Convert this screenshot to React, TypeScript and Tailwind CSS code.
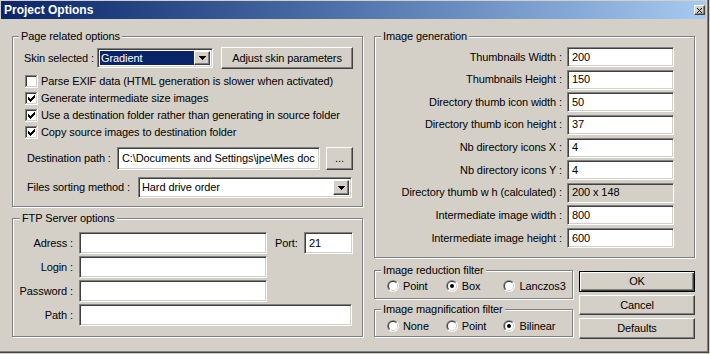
import React, { useId } from "react";

const sunken =
  "box-border border border-t-[#808080] border-l-[#808080] border-b-white border-r-white shadow-[inset_1px_1px_0_#404040,inset_-1px_-1px_0_#d4d0c8]";
const raised =
  "box-border border border-t-white border-l-white border-b-[#404040] border-r-[#404040] shadow-[inset_-1px_-1px_0_#808080] bg-[#d4d0c8]";
const etched = "relative box-border border border-[#808080] shadow-[inset_1px_1px_0_#fff,1px_1px_0_#fff]";

function Check({ checked }: { checked: boolean }) {
  return (
    <svg width="13" height="13" viewBox="0 0 13 13" shapeRendering="crispEdges" className="shrink-0">
      <rect x="0" y="0" width="13" height="13" fill="#fff" />
      <path d="M0 0h12v1H1v11H0z" fill="#808080" />
      <path d="M1 1h10v1H2v9H1z" fill="#404040" />
      <path d="M1 11h11v1H1z M11 1h1v11h-1z" fill="#d4d0c8" />
      {checked && (
        <path
          d="M3 5h1v3h-1z M4 6h1v3h-1z M5 7h1v3h-1z M6 6h1v3h-1z M7 5h1v3h-1z M8 4h1v3h-1z M9 3h1v3h-1z"
          fill="#000"
        />
      )}
    </svg>
  );
}

function Radio({ checked }: { checked: boolean }) {
  const id = useId().replace(/:/g, "");
  return (
    <svg width="12" height="12" viewBox="0 0 12 12" className="shrink-0">
      <defs>
        <clipPath id={`tl${id}`}>
          <polygon points="0,0 12,0 0,12" />
        </clipPath>
        <clipPath id={`br${id}`}>
          <polygon points="12,0 12,12 0,12" />
        </clipPath>
      </defs>
      <circle cx="6" cy="6" r="6" fill="#fff" />
      <g clipPath={`url(#tl${id})`}>
        <circle cx="6" cy="6" r="6" fill="#808080" />
        <circle cx="6" cy="6" r="5" fill="#404040" />
      </g>
      <g clipPath={`url(#br${id})`}>
        <circle cx="6" cy="6" r="5" fill="#d4d0c8" />
      </g>
      <circle cx="6" cy="6" r="4" fill="#fff" />
      {checked && <circle cx="6" cy="6" r="2" fill="#000" />}
    </svg>
  );
}

function Arrow() {
  return (
    <svg width="7" height="4" viewBox="0 0 7 4" shapeRendering="crispEdges">
      <path d="M0 0h7v1H0z M1 1h5v1H1z M2 2h3v1H2z M3 3h1v1H3z" fill="#000" />
    </svg>
  );
}

function DropBtn() {
  return (
    <div className={`${raised} w-[16px] h-full flex items-center justify-center shrink-0`}>
      <Arrow />
    </div>
  );
}

function RadioItem({ label, checked, w }: { label: string; checked: boolean; w: string }) {
  return (
    <div className={`flex items-center gap-[4px] ${w}`}>
      <Radio checked={checked} />
      <span className="leading-[12px]">{label}</span>
    </div>
  );
}

function CheckRow({ label, checked }: { label: string; checked: boolean }) {
  return (
    <div className="flex items-center gap-[3px] h-[13px] ml-[1px]">
      <Check checked={checked} />
      <span className="leading-[13px] whitespace-nowrap">{label}</span>
    </div>
  );
}

function GenRow({ label, value, gray }: { label: string; value: string; gray?: boolean }) {
  return (
    <div className="flex items-center h-[20px]">
      <div className="w-[187px] text-right whitespace-nowrap">{label}</div>
      <div
        className={`${sunken} ml-[5px] w-[107px] h-[20px] flex items-center pl-[4px] ${
          gray ? "bg-[#d4d0c8]" : "bg-white"
        }`}
      >
        {value}
      </div>
    </div>
  );
}

function FtpLabel({ children }: { children: React.ReactNode }) {
  return <div className="w-[59px] text-right whitespace-nowrap">{children}</div>;
}

export default function App() {
  return (
    <div className="w-[710px] h-[354px] bg-[#d4d0c8] font-['Liberation_Sans',Arial,sans-serif] text-[11px] tracking-[-0.1px] text-black leading-[13px] overflow-hidden">
      <div className="w-[709px] h-[353px] pt-[1px] pl-[1px] border-r border-b border-[#404040] shadow-[inset_-1px_-1px_0_#808080]">
        {/* Title bar */}
        <div className="w-[705px] h-[18px] bg-gradient-to-r from-[#0a246a] to-[#a6caf0] flex items-center justify-between pl-[3px] pr-[1px]">
          <span className="text-white font-bold text-[12px] leading-[14px] tracking-normal">Project Options</span>
          <div className={`${raised} w-[11px] h-[10px] flex items-center justify-center`}>
            <svg width="5" height="5" viewBox="0 0 5 5" shapeRendering="crispEdges">
              <path d="M0 0h1v1H0z M1 1h1v1H1z M2 2h1v1H2z M3 3h1v1H3z M4 4h1v1H4z M4 0h1v1H4z M3 1h1v1H3z M1 3h1v1H1z M0 4h1v1H0z" fill="#000" />
            </svg>
          </div>
        </div>

        <div className="flex ml-[11px] mt-[17px] gap-[11px]">
          {/* Left column */}
          <div className="w-[351px] flex flex-col">
            <div className={`${etched} h-[171px] pt-[10px] pl-[11px]`}>
              <span className="absolute -top-[7px] left-[6px] bg-[#d4d0c8] px-[2px] whitespace-nowrap">
                Page related options
              </span>
              <div className="flex items-center h-[22px]">
                <div className="w-[73px] whitespace-nowrap">Skin selected :</div>
                <div className={`${sunken} w-[116px] h-[20px] bg-white flex items-stretch p-[2px]`}>
                  <div className="flex-1 bg-[#0a246a] text-white flex items-center pl-[1px]">Gradient</div>
                  <DropBtn />
                </div>
                <div className={`${raised} ml-[8px] w-[132px] h-[22px] flex items-center justify-center`}>
                  Adjust skin parameters
                </div>
              </div>
              <div className="flex flex-col gap-[4px] mt-[6px]">
                <CheckRow label="Parse EXIF data (HTML generation is slower when activated)" checked={false} />
                <CheckRow label="Generate intermediate size images" checked />
                <CheckRow label="Use a destination folder rather than generating in source folder" checked />
                <CheckRow label="Copy source images to destination folder" checked />
              </div>
              <div className="flex items-center mt-[8px] ml-[3px] h-[23px]">
                <div className="w-[90px] whitespace-nowrap">Destination path :</div>
                <div className={`${sunken} w-[203px] h-[23px] bg-white flex items-center pl-[4px] overflow-hidden whitespace-nowrap`}>
                  C:\Documents and Settings\jpe\Mes doc
                </div>
                <div className={`${raised} ml-[6px] w-[27px] h-[23px] flex items-center justify-center`}>...</div>
              </div>
              <div className="flex items-center mt-[7px] ml-[3px] h-[21px]">
                <div className="w-[111px] whitespace-nowrap">Files sorting method :</div>
                <div className={`${sunken} w-[214px] h-[21px] bg-white flex items-stretch p-[2px]`}>
                  <div className="flex-1 flex items-center pl-[1px]">Hard drive order</div>
                  <DropBtn />
                </div>
              </div>
            </div>

            <div className={`${etched} mt-[11px] h-[119px] pt-[13px] pl-[1px]`}>
              <span className="absolute -top-[7px] left-[7px] bg-[#d4d0c8] px-[2px] whitespace-nowrap">
                FTP Server options
              </span>
              <div className="flex flex-col gap-[2px]">
                <div className="flex items-center h-[22px]">
                  <FtpLabel>Adress :</FtpLabel>
                  <div className={`${sunken} ml-[6px] w-[188px] h-[22px] bg-white`} />
                  <div className="ml-[8px] w-[29px] whitespace-nowrap">Port:</div>
                  <div className={`${sunken} w-[49px] h-[22px] bg-white flex items-center pl-[4px]`}>21</div>
                </div>
                <div className="flex items-center h-[22px]">
                  <FtpLabel>Login :</FtpLabel>
                  <div className={`${sunken} ml-[6px] w-[188px] h-[22px] bg-white`} />
                </div>
                <div className="flex items-center h-[22px]">
                  <FtpLabel>Password :</FtpLabel>
                  <div className={`${sunken} ml-[6px] w-[188px] h-[22px] bg-white`} />
                </div>
                <div className="flex items-center h-[22px]">
                  <FtpLabel>Path :</FtpLabel>
                  <div className={`${sunken} ml-[6px] w-[273px] h-[22px] bg-white`} />
                </div>
              </div>
            </div>
          </div>

          {/* Right column */}
          <div className="w-[321px] flex flex-col">
            <div className={`${etched} h-[222px] pt-[10px]`}>
              <span className="absolute -top-[7px] left-[6px] bg-[#d4d0c8] px-[2px] whitespace-nowrap">
                Image generation
              </span>
              <div className="h-[201px] flex flex-col justify-between">
                <GenRow label="Thumbnails Width :" value="200" />
                <GenRow label="Thumbnails Height :" value="150" />
                <GenRow label="Directory thumb icon width :" value="50" />
                <GenRow label="Directory thumb icon height :" value="37" />
                <GenRow label="Nb directory icons X :" value="4" />
                <GenRow label="Nb directory icons Y :" value="4" />
                <GenRow label="Directory thumb w h (calculated) :" value="200 x 148" gray />
                <GenRow label="Intermediate image width :" value="800" />
                <GenRow label="Intermediate image height :" value="600" />
              </div>
            </div>

            <div className="flex mt-[12px] gap-[6px]">
              <div className="w-[199px] flex flex-col">
                <div className={`${etched} h-[29px] pt-[9px] pl-[12px]`}>
                  <span className="absolute -top-[7px] left-[6px] bg-[#d4d0c8] px-[2px] whitespace-nowrap">
                    Image reduction filter
                  </span>
                  <div className="flex h-[12px]">
                    <RadioItem label="Point" checked={false} w="w-[60px]" />
                    <RadioItem label="Box" checked w="w-[59px]" />
                    <RadioItem label="Lanczos3" checked={false} w="w-[70px]" />
                  </div>
                </div>
                <div className={`${etched} mt-[10px] h-[28px] pt-[10px] pl-[12px]`}>
                  <span className="absolute -top-[7px] left-[6px] bg-[#d4d0c8] px-[2px] whitespace-nowrap">
                    Image magnification filter
                  </span>
                  <div className="flex h-[12px]">
                    <RadioItem label="None" checked={false} w="w-[60px]" />
                    <RadioItem label="Point" checked={false} w="w-[59px]" />
                    <RadioItem label="Bilinear" checked w="w-[70px]" />
                  </div>
                </div>
              </div>
              <div className="w-[116px] flex flex-col pt-[1px]">
                <div className="box-border border border-black shadow-[inset_1px_1px_0_#fff,inset_-1px_-1px_0_#404040,inset_-2px_-2px_0_#808080] bg-[#d4d0c8] h-[21px] flex items-center justify-center">
                  OK
                </div>
                <div className={`${raised} mt-[3px] h-[20px] flex items-center justify-center`}>Cancel</div>
                <div className={`${raised} mt-[3px] h-[21px] flex items-center justify-center`}>Defaults</div>
              </div>
            </div>
          </div>
        </div>
      </div>
    </div>
  );
}
